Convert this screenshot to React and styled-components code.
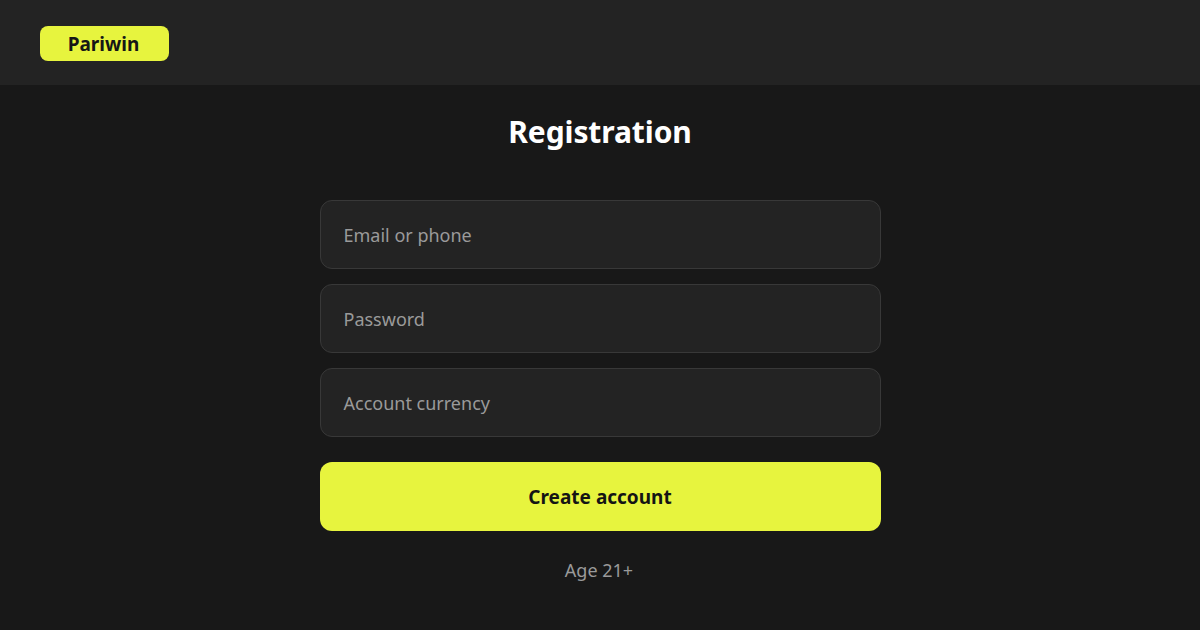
import { createGlobalStyle, styled } from "styled-components";

const GlobalStyle = createGlobalStyle`
  html, body {
    margin: 0;
    height: 100%;
    background: #181818;
  }
  body {
    font-family: "Noto Sans", "Open Sans", sans-serif;
  }
  * {
    box-sizing: border-box;
  }
`;

const Header = styled.header`
  display: flex;
  align-items: center;
  height: 85px;
  padding: 2px 40px 0;
  background: #232323;
`;

const Logo = styled.a`
  display: flex;
  align-items: center;
  justify-content: center;
  width: 129px;
  height: 35px;
  padding-right: 2px;
  border-radius: 8px;
  background: #e7f43e;
  color: #161616;
  font-size: 19px;
  font-weight: 700;
`;

const Main = styled.main`
  display: flex;
  flex-direction: column;
  align-items: center;
`;

const Title = styled.h1`
  margin: 25px 0 46px;
  height: 44px;
  color: #fff;
  font-size: 30px;
  line-height: 44px;
  font-weight: 700;
  letter-spacing: -0.1px;
`;

const Form = styled.form`
  display: flex;
  flex-direction: column;
  gap: 15px;
  width: 561px;
`;

const Field = styled.div`
  display: flex;
  align-items: center;
  height: 69px;
  padding: 0 23px;
  border: 1px solid #383838;
  border-radius: 12px;
  background: #232323;
  color: #9a9a9a;
  font-size: 18px;
`;

const Submit = styled.button`
  height: 69px;
  margin-top: 10px;
  border: none;
  border-radius: 12px;
  background: #e7f43e;
  color: #141414;
  font-family: inherit;
  font-size: 19px;
  font-weight: 700;
`;

const Note = styled.p`
  margin: 26px 0 0;
  padding-right: 2px;
  color: #9a9a9a;
  font-size: 18px;
  line-height: 26px;
`;

export default function App() {
  return (
    <>
      <GlobalStyle />
      <Header>
        <Logo>Pariwin</Logo>
      </Header>
      <Main>
        <Title>Registration</Title>
        <Form>
          <Field>Email or phone</Field>
          <Field>Password</Field>
          <Field>Account currency</Field>
          <Submit type="button">Create account</Submit>
        </Form>
        <Note>Age 21+</Note>
      </Main>
    </>
  );
}
